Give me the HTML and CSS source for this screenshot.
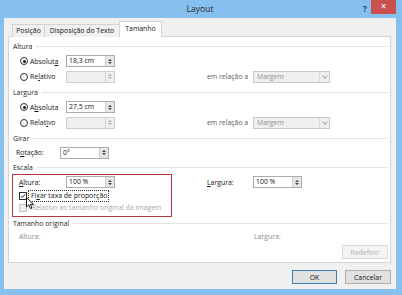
FILE: index.html
```html
<!DOCTYPE html>
<html>
<head>
<meta charset="utf-8">
<link rel="stylesheet" href="styles.css">
</head>
<body>
<div class="window">
  <div class="titlebar">
    <span class="title">Layout</span>
    <span class="help">?</span>
    <span class="close">×</span>
  </div>
  <div class="client">
    <div class="tabs">
      <div class="tab t1">Posição</div>
      <div class="tab t2">Disposição do Texto</div>
      <div class="tab t3 active">Tamanho</div>
    </div>
    <div class="panel">
      <div class="heading"><span>Altura</span><i></i></div>
      <div class="row">
        <div class="opt"><span class="radio on"></span><span>Absolut<u>a</u></span></div>
        <div class="spin"><span class="val">18,3 cm</span><span class="arrows"><b class="up"></b><b class="dn"></b></span></div>
      </div>
      <div class="row">
        <div class="opt"><span class="radio"></span><span>Re<u>l</u>ativo</span></div>
        <div class="spin off"><span class="val"></span><span class="arrows"><b class="up"></b><b class="dn"></b></span></div>
        <div class="rel">em relação a</div>
        <div class="select"><span class="val">Margem</span><span class="drop"></span></div>
      </div>
      <div class="heading"><span>Largura</span><i></i></div>
      <div class="row">
        <div class="opt"><span class="radio on"></span><span>A<u>b</u>soluta</span></div>
        <div class="spin"><span class="val">27,5 cm</span><span class="arrows"><b class="up"></b><b class="dn"></b></span></div>
      </div>
      <div class="row">
        <div class="opt"><span class="radio"></span><span>Relat<u>i</u>vo</span></div>
        <div class="spin off"><span class="val"></span><span class="arrows"><b class="up"></b><b class="dn"></b></span></div>
        <div class="rel">em relação a</div>
        <div class="select"><span class="val">Margem</span><span class="drop"></span></div>
      </div>
      <div class="heading"><span>Girar</span><i></i></div>
      <div class="row rot">
        <div class="lab rotlab">R<u>o</u>tação:</div>
        <div class="spin"><span class="val">0°</span><span class="arrows"><b class="up"></b><b class="dn"></b></span></div>
      </div>
      <div class="heading"><span>Escala</span><i></i></div>
      <div class="row scale">
        <div class="lab"><u>A</u>ltura:</div>
        <div class="spin"><span class="val">100 %</span><span class="arrows"><b class="up"></b><b class="dn"></b></span></div>
        <div class="lab lab2"><u>L</u>argura:</div>
        <div class="spin"><span class="val">100 %</span><span class="arrows"><b class="up"></b><b class="dn"></b></span></div>
      </div>
      <div class="crow">
        <span class="check on"><svg width="8" height="8" viewBox="0 0 8 8"><path d="M1.2 4.2 L3 6 L6.8 1.8" fill="none" stroke="#1a1a1a" stroke-width="1.3"/></svg></span>
        <span class="focus">Fi<u>x</u>ar taxa de proporção</span>
      </div>
      <div class="crow dis">
        <span class="check"></span>
        <span class="ctext">Relativo ao tamanho original da imagem</span>
      </div>
      <div class="heading h5"><span>Tamanho original</span><i></i></div>
      <div class="row orig">
        <div class="lab grey">Altura:</div>
        <div class="lab grey lab3">Largura:</div>
      </div>
      <div class="resetrow"><div class="btn disabled">Redefinir</div></div>
      <div class="redbox"></div>
      <svg class="cursor" width="9" height="13" viewBox="0 0 9 13"><path d="M0.5 0.5 L0.5 10 L2.8 7.8 L4.4 11.6 L5.9 11 L4.4 7.3 L7.6 7.3 Z" fill="#fff" stroke="#000" stroke-width="0.9"/></svg>
    </div>
    <div class="buttons">
      <div class="btn default">OK</div>
      <div class="btn">Cancelar</div>
    </div>
  </div>
</div>
</body>
</html>
```

FILE: styles.css
```css
* { box-sizing: border-box; }
html, body { margin: 0; padding: 0; }
body {
  width: 402px;
  height: 295px;
  overflow: hidden;
  font-family: "Open Sans", "Liberation Sans", sans-serif;
  font-size: 6.9px;
  color: #141414;
  background: #86c0ef;
}
u { text-decoration: underline; text-underline-offset: 1px; }
.window {
  width: 402px;
  height: 295px;
  padding: 0 6px 6px 4px;
  display: flex;
  flex-direction: column;
  background: #86c0ef;
}
.titlebar {
  height: 18px;
  position: relative;
  display: flex;
  align-items: center;
  justify-content: center;
}
.title { font-size: 8.6px; color: #2b2b2b; margin-top: -1px; }
.help {
  position: absolute;
  left: 359px;
  top: 3px;
  font-size: 8px;
  font-weight: bold;
  color: #2a3a4a;
}
.close {
  position: absolute;
  left: 367px;
  top: 0;
  width: 25px;
  height: 14px;
  background: #c9504c;
  color: #fff;
  font-size: 10px;
  line-height: 13px;
  text-align: center;
}
.client {
  flex: 1;
  background: #f0f0f0;
  padding: 4px 5px 4px 4px;
  display: flex;
  flex-direction: column;
}
.tabs {
  display: flex;
  align-items: flex-end;
  height: 15px;
  padding-left: 4px;
  position: relative;
  z-index: 2;
  margin-bottom: -1px;
}
.tab {
  height: 13px;
  border: 1px solid #d4d4d4;
  border-bottom: none;
  border-right: none;
  background: #f0f0f0;
  line-height: 12px;
  text-align: center;
}
.t1 { width: 32px; }
.t2 { width: 75px; }
.t3 { width: 43px; border-right: 1px solid #d4d4d4; }
.tab.active {
  height: 16px;
  background: #fff;
  line-height: 14px;
  border-color: #d4d4d4;
}
.panel {
  position: relative;
  height: 227px;
  background: #fff;
  border: 1px solid #d4d4d4;
  padding: 1.5px 2px 0 4px;
  display: flex;
  flex-direction: column;
}
.heading {
  height: 15px;
  display: flex;
  align-items: center;
  color: #1e1e1e;
}
.heading i {
  flex: 1;
  height: 1px;
  background: #e3e3e3;
  margin-left: 4px;
}
.h5 { margin-top: 2px; }
.row {
  height: 15.5px;
  display: flex;
  align-items: center;
  padding-left: 7px;
}
.row.rot { height: 14px; padding-left: 3px; }
.row.scale { height: 15px; padding-left: 6px; }
.row.orig { height: 12px; padding-left: 6px; }
.opt {
  width: 46px;
  display: flex;
  align-items: center;
}
.radio {
  width: 8px;
  height: 8px;
  border-radius: 50%;
  border: 1px solid #333;
  background: #fff;
  margin-right: 2px;
  position: relative;
}
.radio.on::after {
  content: "";
  position: absolute;
  left: 1.5px;
  top: 1.5px;
  width: 3px;
  height: 3px;
  border-radius: 50%;
  background: #1a1a1a;
}
.lab { width: 47px; }
.rotlab { width: 44px; }
.lab2 { margin-left: 92px; width: 46px; }
.lab3 { margin-left: 188px; }
.grey { color: #8a8a8a; }
.spin {
  width: 49px;
  height: 12px;
  border: 1px solid #acacac;
  background: #fff;
  display: flex;
  align-items: center;
  justify-content: space-between;
  padding-left: 2px;
}
.spin.off { background: #f0f0f0; border-color: #cfcfcf; }
.spin .val { line-height: 10px; }
.arrows {
  width: 9px;
  height: 10px;
  display: flex;
  flex-direction: column;
  justify-content: center;
  align-items: center;
  gap: 1px;
  background: #e6e6e6;
  border-left: 1px solid #d0d0d0;
}
.spin.off .arrows { background: #f0f0f0; }
.up, .dn { width: 0; height: 0; border-left: 2px solid transparent; border-right: 2px solid transparent; }
.up { border-bottom: 2px solid #444; }
.dn { border-top: 2px solid #444; }
.spin.off .up { border-bottom-color: #aaa; }
.spin.off .dn { border-top-color: #aaa; }
.rel {
  margin-left: 92px;
  width: 46px;
  color: #5a5a5a;
}
.select {
  width: 77px;
  height: 12px;
  border: 1px solid #c8c8c8;
  background: #efefef;
  display: flex;
  align-items: center;
  justify-content: space-between;
  padding-left: 3px;
  color: #8f8f8f;
}
.drop {
  width: 10px;
  height: 10px;
  border-left: 1px solid #d8d8d8;
  position: relative;
}
.drop::after {
  content: "";
  position: absolute;
  left: 2.5px;
  top: 2px;
  width: 3px;
  height: 3px;
  border-right: 1px solid #aaa;
  border-bottom: 1px solid #aaa;
  transform: rotate(45deg);
}
.crow {
  height: 12px;
  display: flex;
  align-items: center;
  padding-left: 6px;
}
.check {
  width: 8px;
  height: 8px;
  border: 1px solid #333;
  background: #fff;
  display: flex;
  align-items: center;
  justify-content: center;
  margin-right: 2px;
}
.check svg { display: block; }
.focus {
  outline: 1px dotted #333;
  padding: 0 1px 0 2px;
  line-height: 10px;
}
.crow.dis { color: #a8a8a8; }
.crow.dis .check { border-color: #c4c4c4; background: #ececec; }
.ctext { padding-left: 3px; }
.resetrow {
  display: flex;
  justify-content: flex-end;
  margin-top: 2.5px;
}
.btn {
  width: 46px;
  height: 14px;
  border: 1px solid #adadad;
  background: #e1e1e1;
  display: flex;
  align-items: center;
  justify-content: center;
}
.btn.disabled {
  color: #b0b0b0;
  background: #f4f4f4;
  border-color: #d9d9d9;
}
.btn.default { border-color: #3c7fb1; width: 45px; }
.buttons {
  display: flex;
  justify-content: flex-end;
  gap: 8px;
  margin-top: 7px;
}
.redbox {
  position: absolute;
  left: 3px;
  top: 137px;
  width: 160px;
  height: 43px;
  border: 1px solid #b8353d;
}
.cursor {
  position: absolute;
  left: 17px;
  top: 160px;
}
```
